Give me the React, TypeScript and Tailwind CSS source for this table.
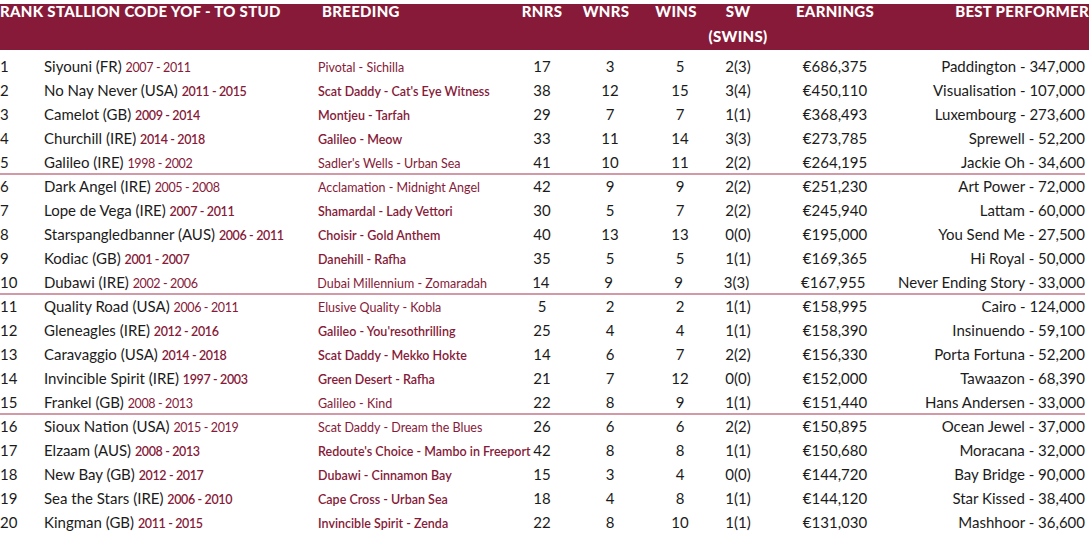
type Row = {
  rank: number
  name: string
  years: string
  breeding: string
  rnrs: string
  wnrs: string
  wins: string
  sw: string
  earnings: string
  best: string
}

const rows: Row[] = [
  { rank: 1, name: 'Siyouni (FR)', years: '2007 - 2011', breeding: 'Pivotal - Sichilla', rnrs: '17', wnrs: '3', wins: '5', sw: '2(3)', earnings: '€686,375', best: 'Paddington - 347,000' },
  { rank: 2, name: 'No Nay Never (USA)', years: '2011 - 2015', breeding: "Scat Daddy - Cat's Eye Witness", rnrs: '38', wnrs: '12', wins: '15', sw: '3(4)', earnings: '€450,110', best: 'Visualisation - 107,000' },
  { rank: 3, name: 'Camelot (GB)', years: '2009 - 2014', breeding: 'Montjeu - Tarfah', rnrs: '29', wnrs: '7', wins: '7', sw: '1(1)', earnings: '€368,493', best: 'Luxembourg - 273,600' },
  { rank: 4, name: 'Churchill (IRE)', years: '2014 - 2018', breeding: 'Galileo - Meow', rnrs: '33', wnrs: '11', wins: '14', sw: '3(3)', earnings: '€273,785', best: 'Sprewell - 52,200' },
  { rank: 5, name: 'Galileo (IRE)', years: '1998 - 2002', breeding: "Sadler's Wells - Urban Sea", rnrs: '41', wnrs: '10', wins: '11', sw: '2(2)', earnings: '€264,195', best: 'Jackie Oh - 34,600' },
  { rank: 6, name: 'Dark Angel (IRE)', years: '2005 - 2008', breeding: 'Acclamation - Midnight Angel', rnrs: '42', wnrs: '9', wins: '9', sw: '2(2)', earnings: '€251,230', best: 'Art Power - 72,000' },
  { rank: 7, name: 'Lope de Vega (IRE)', years: '2007 - 2011', breeding: 'Shamardal - Lady Vettori', rnrs: '30', wnrs: '5', wins: '7', sw: '2(2)', earnings: '€245,940', best: 'Lattam - 60,000' },
  { rank: 8, name: 'Starspangledbanner (AUS)', years: '2006 - 2011', breeding: 'Choisir - Gold Anthem', rnrs: '40', wnrs: '13', wins: '13', sw: '0(0)', earnings: '€195,000', best: 'You Send Me - 27,500' },
  { rank: 9, name: 'Kodiac (GB)', years: '2001 - 2007', breeding: 'Danehill - Rafha', rnrs: '35', wnrs: '5', wins: '5', sw: '1(1)', earnings: '€169,365', best: 'Hi Royal - 50,000' },
  { rank: 10, name: 'Dubawi (IRE)', years: '2002 - 2006', breeding: 'Dubai Millennium - Zomaradah', rnrs: '14', wnrs: '9', wins: '9', sw: '3(3)', earnings: '€167,955', best: 'Never Ending Story - 33,000' },
  { rank: 11, name: 'Quality Road (USA)', years: '2006 - 2011', breeding: 'Elusive Quality - Kobla', rnrs: '5', wnrs: '2', wins: '2', sw: '1(1)', earnings: '€158,995', best: 'Cairo - 124,000' },
  { rank: 12, name: 'Gleneagles (IRE)', years: '2012 - 2016', breeding: "Galileo - You'resothrilling", rnrs: '25', wnrs: '4', wins: '4', sw: '1(1)', earnings: '€158,390', best: 'Insinuendo - 59,100' },
  { rank: 13, name: 'Caravaggio (USA)', years: '2014 - 2018', breeding: 'Scat Daddy - Mekko Hokte', rnrs: '14', wnrs: '6', wins: '7', sw: '2(2)', earnings: '€156,330', best: 'Porta Fortuna - 52,200' },
  { rank: 14, name: 'Invincible Spirit (IRE)', years: '1997 - 2003', breeding: 'Green Desert - Rafha', rnrs: '21', wnrs: '7', wins: '12', sw: '0(0)', earnings: '€152,000', best: 'Tawaazon - 68,390' },
  { rank: 15, name: 'Frankel (GB)', years: '2008 - 2013', breeding: 'Galileo - Kind', rnrs: '22', wnrs: '8', wins: '9', sw: '1(1)', earnings: '€151,440', best: 'Hans Andersen - 33,000' },
  { rank: 16, name: 'Sioux Nation (USA)', years: '2015 - 2019', breeding: 'Scat Daddy - Dream the Blues', rnrs: '26', wnrs: '6', wins: '6', sw: '2(2)', earnings: '€150,895', best: 'Ocean Jewel - 37,000' },
  { rank: 17, name: 'Elzaam (AUS)', years: '2008 - 2013', breeding: "Redoute's Choice - Mambo in Freeport", rnrs: '42', wnrs: '8', wins: '8', sw: '1(1)', earnings: '€150,680', best: 'Moracana - 32,000' },
  { rank: 18, name: 'New Bay (GB)', years: '2012 - 2017', breeding: 'Dubawi - Cinnamon Bay', rnrs: '15', wnrs: '3', wins: '4', sw: '0(0)', earnings: '€144,720', best: 'Bay Bridge - 90,000' },
  { rank: 19, name: 'Sea the Stars (IRE)', years: '2006 - 2010', breeding: 'Cape Cross - Urban Sea', rnrs: '18', wnrs: '4', wins: '8', sw: '1(1)', earnings: '€144,120', best: 'Star Kissed - 38,400' },
  { rank: 20, name: 'Kingman (GB)', years: '2011 - 2015', breeding: 'Invincible Spirit - Zenda', rnrs: '22', wnrs: '8', wins: '10', sw: '1(1)', earnings: '€131,030', best: 'Mashhoor - 36,600' },
]

// rows printed in the lighter face
const lightRows = [1, 5, 6, 10, 11, 15, 16]
// rows with a rule under them
const ruledRows = [5, 10, 15]

export default function App() {
  return (
    <div className="h-[552px] w-[1089px] overflow-hidden bg-white pt-1 font-['Lato','Liberation_Sans',sans-serif] text-[#1b1b1b]">
      <div className="flex h-[46px] items-start bg-[#861a38]">
        <div className="-mt-[5px] flex w-full text-[15px] font-black uppercase leading-[25px] tracking-[0.02em] text-white">
          <div className="w-[318px] whitespace-nowrap">Rank Stallion Code YOF - To Stud</div>
          <div className="w-[200px] pl-1">Breeding</div>
          <div className="w-[48px] text-center">RNRS</div>
          <div className="w-[88px] pr-2 text-center">WNRS</div>
          <div className="w-[52px] pr-2 text-center">WINS</div>
          <div className="w-[64px] text-center">
            SW
            <br />
            (SWINS)
          </div>
          <div className="w-[130px] text-center">Earnings</div>
          <div className="flex-1 whitespace-nowrap text-right">Best Performer</div>
        </div>
      </div>

      <div className="mt-[5px] w-[1085px]">
        {rows.map((r) => {
          const light = lightRows.includes(r.rank)
          return (
            <div
              key={r.rank}
              className={`flex h-[24px] items-baseline text-[15px] leading-[22px] ${
                ruledRows.includes(r.rank) ? 'border-b-2 border-[#d29aa7]' : ''
              }`}
            >
              <div className="w-[44px]">{r.rank}</div>
              <div className="w-[274px] whitespace-nowrap">
                {r.name}{' '}
                <span
                  className={`text-[12.5px] tracking-[-0.03em] text-[#861a38] ${
                    light ? 'font-normal' : 'font-semibold'
                  }`}
                >
                  {r.years}
                </span>
              </div>
              <div
                className={`w-[200px] whitespace-nowrap text-[12.5px] text-[#861a38] ${
                  light ? 'font-normal' : 'font-semibold'
                }`}
              >
                {r.breeding}
              </div>
              <div className="w-[48px] text-center">{r.rnrs}</div>
              <div className="w-[88px] text-center">{r.wnrs}</div>
              <div className="w-[52px] text-center">{r.wins}</div>
              <div className="w-[64px] text-center">{r.sw}</div>
              <div className="w-[130px] text-center">{r.earnings}</div>
              <div className="flex-1 whitespace-nowrap text-right">{r.best}</div>
            </div>
          )
        })}
      </div>
    </div>
  )
}
